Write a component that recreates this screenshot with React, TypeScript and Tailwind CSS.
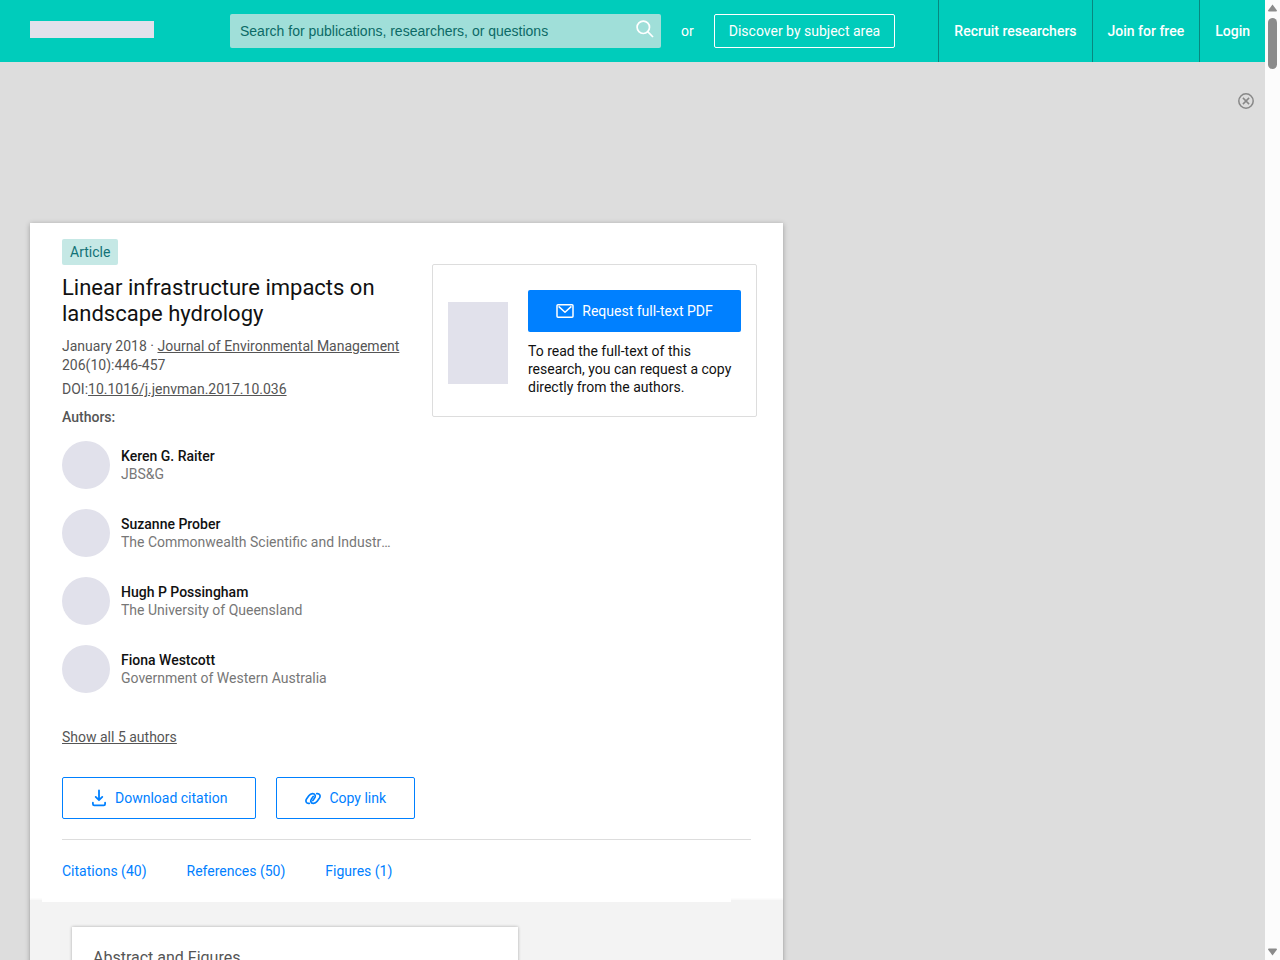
import React from 'react';

const authors = [
  { name: 'Keren G. Raiter', org: 'JBS&G' },
  { name: 'Suzanne Prober', org: 'The Commonwealth Scientific and Industrial Research Organisation' },
  { name: 'Hugh P Possingham', org: 'The University of Queensland' },
  { name: 'Fiona Westcott', org: 'Government of Western Australia' },
];

const tabs = ['Citations (40)', 'References (50)', 'Figures (1)'];
const navLinks = ['Recruit researchers', 'Join for free', 'Login'];

function SearchIcon() {
  return (
    <svg width="18" height="18" viewBox="0 0 18 18" fill="none" stroke="white" strokeWidth="1.7" aria-hidden="true">
      <circle cx="7.3" cy="7.3" r="6.2" />
      <path d="M11.7 11.7 17 17" />
    </svg>
  );
}

function MailIcon() {
  return (
    <svg width="18" height="14" viewBox="0 0 18 14" fill="none" stroke="white" strokeWidth="1.5" strokeLinejoin="round" aria-hidden="true">
      <rect x="1" y="0.8" width="16" height="12.4" rx="1" />
      <path d="M2.6 2.4 9 8.2l6.4-5.8" />
    </svg>
  );
}

function DownloadIcon() {
  return (
    <svg width="16" height="18" viewBox="0 0 16 18" fill="none" stroke="currentColor" strokeWidth="1.8" strokeLinecap="round" strokeLinejoin="round" aria-hidden="true">
      <path d="M8 1.400v9.600M4.700 7.900 8 11.200l3.300-3.300" />
      <path d="M1.900 13.700v1.300q0 1.300 1.300 1.300h9.600q1.300 0 1.300-1.300v-1.300" />
    </svg>
  );
}

function LinkIcon() {
  return (
    <svg width="16" height="13" viewBox="0 0 18 14" fill="none" stroke="currentColor" strokeWidth="1.9" strokeLinecap="round" strokeLinejoin="round" aria-hidden="true">
      <path d="M4.800 12.400C1.400 12.900.1 9.800 1.900 7.200L4.300 3.900C6.600.8 10.900.7 11.500 3.600c.2 1.300-.2 2.200-.9 3.200L8.800 9.300" />
      <path d="M13.200 1.600c3.400-.5 4.700 2.600 2.900 5.200l-2.400 3.300c-2.300 3.100-6.600 3.200-7.200.3-.2-1.300.2-2.200.9-3.200l1.800-2.500" />
    </svg>
  );
}

function CloseIcon() {
  return (
    <svg width="16" height="16" viewBox="0 0 16 16" fill="none" stroke="#888" strokeWidth="1.5" aria-hidden="true">
      <circle cx="8" cy="8" r="7.200" />
      <path d="m4.900 4.900 6.200 6.200M11.100 4.900l-6.200 6.200" />
    </svg>
  );
}

function Header() {
  return (
    <header className="flex h-[62px] shrink-0 items-center bg-[#00ccbb] pl-[30px] text-white">
      <a href="#home" aria-label="Home" className="mr-[76px] mb-1 block h-[17px] w-[124px] shrink-0 bg-[#e1e1eb]" />
      <form className="flex h-[34px] w-[431px] items-center rounded-xs bg-[#a0dfd9] pr-[7px] pl-2.5">
        <input
          type="search"
          aria-label="Search"
          placeholder="Search for publications, researchers, or questions"
          className="h-full min-w-0 flex-1 bg-transparent font-['Liberation_Sans',sans-serif] text-sm text-[#0c6a66] outline-none placeholder:text-[#0c6a66]"
        />
        <button type="button" aria-label="Submit search" className="mb-1">
          <SearchIcon />
        </button>
      </form>
      <span className="mx-5">or</span>
      <a href="#topics" className="flex h-[34px] items-center rounded-xs border border-white px-3.5 whitespace-nowrap">
        Discover by subject area
      </a>
      <nav className="ml-auto flex h-full">
        {navLinks.map((label) => (
          <a key={label} href="#nav" className="flex h-full items-center border-l border-[#08877f] px-[15px] font-medium whitespace-nowrap">
            {label}
          </a>
        ))}
      </nav>
    </header>
  );
}

function RequestBox() {
  return (
    <section className="mt-[25px] flex w-[325px] shrink-0 items-start rounded-xs border border-[#dddddd] px-[15px] pt-[25px] pb-5">
      <div className="mt-3 mr-5 h-[82px] w-[60px] shrink-0 bg-[#e1e1eb]" />
      <div className="flex-1">
        <button type="button" className="flex h-[42px] w-full items-center justify-center gap-2 rounded-xs bg-[#0080ff] text-white">
          <MailIcon />
          Request full-text PDF
        </button>
        <p className="mt-2.5 leading-[18px] text-[#111111]">
          To read the full-text of this research, you can request a copy directly from the authors.
        </p>
      </div>
    </section>
  );
}

function ArticleCard() {
  return (
    <article className="flex min-w-0 flex-1 flex-col bg-white shadow-[0_1px_5px_rgba(0,0,0,0.3)]">
      <div className="flex items-start justify-between pt-4 pr-[26px] pl-8">
        <div className="w-[340px]">
          <span className="flex h-[26px] w-fit items-center rounded-xs bg-[#c5e8e5] px-2 text-[#127277]">Article</span>
          <h1 className="mt-2.5 text-[22px] leading-[26px] text-[#111111]">
            Linear infrastructure impacts on landscape hydrology
          </h1>
          <p className="mt-2.5 leading-[19px]">
            January 2018 ·{' '}
            <a href="#journal" className="underline underline-offset-1">Journal of Environmental Management</a>{' '}
            206(10):446-457
          </p>
          <p className="mt-[5px] leading-[19px]">
            DOI:
            <a href="#doi" className="underline underline-offset-1">10.1016/j.jenvman.2017.10.036</a>
          </p>
          <h2 className="mt-[9px] leading-[19px] font-medium">Authors:</h2>
          <ul className="mt-3.5 flex flex-col gap-5">
            {authors.map((a) => (
              <li key={a.name} className="flex h-12 items-center gap-[11px]">
                <span className="size-12 shrink-0 rounded-full bg-[#e1e1eb]" />
                <div className="w-[271px] leading-[18px]">
                  <a href="#author" className="block font-medium text-[#111111]">{a.name}</a>
                  <p className="truncate text-[#777777]">{a.org}</p>
                </div>
              </li>
            ))}
          </ul>
        </div>
        <RequestBox />
      </div>
      <div className="mx-8 mt-[35px] border-b border-[#dddddd] pb-5">
        <button type="button" className="block leading-[18px] underline underline-offset-1">Show all 5 authors</button>
        <div className="mt-[31px] flex gap-5 text-[#0080ff]">
          <button type="button" className="flex h-[42px] items-center gap-2 rounded-xs border border-[#0080ff] px-7">
            <DownloadIcon />
            Download citation
          </button>
          <button type="button" className="flex h-[42px] items-center gap-2 rounded-xs border border-[#0080ff] px-7">
            <LinkIcon />
            Copy link
          </button>
        </div>
      </div>
      <nav className="z-10 mr-[52px] ml-3 flex h-[62px] items-center gap-10 bg-white pl-5 text-[#0080ff]">
        {tabs.map((t) => (
          <a key={t} href="#tab">{t}</a>
        ))}
      </nav>
      <div className="-mt-0.5 flex-1 bg-[#f3f3f3] pt-[27px] pl-[42px] shadow-[0_-1px_2px_rgba(0,0,0,0.04)]">
        <section className="h-60 w-[446px] bg-white px-[21px] pt-[21px] shadow-[0_0_3px_rgba(0,0,0,0.3)]">
          <h2 className="text-base leading-5">Abstract and Figures</h2>
        </section>
      </div>
    </article>
  );
}

function ScrollTrack() {
  return (
    <div className="flex w-[15px] shrink-0 flex-col items-center bg-[#fcfcfc] pt-1 pb-1" aria-hidden="true">
      <svg width="9" height="8" viewBox="0 0 9 8" fill="#8b8b8b"><path d="M4.500.5 9 6.500Q9 7.500 8 7.500H1Q0 7.500 0 6.500Z" /></svg>
      <div className="mt-1.5 h-[51px] w-[9px] rounded-full bg-[#8b8b8b]" />
      <svg className="mt-auto" width="9" height="8" viewBox="0 0 9 8" fill="#8b8b8b"><path d="M4.500 7.500 9 1.500Q9 .5 8 .5H1Q0 .5 0 1.500Z" /></svg>
    </div>
  );
}

export default function App() {
  return (
    <div className="flex h-screen overflow-hidden bg-[#dddddd] font-['Roboto',sans-serif] text-sm text-[#555555]">
      <div className="flex min-w-0 flex-1 flex-col">
        <Header />
        <div className="flex h-[161px] shrink-0 items-start justify-end pt-[31px] pr-[11px]">
          <button type="button" aria-label="Close banner" className="block">
            <CloseIcon />
          </button>
        </div>
        <main className="flex flex-1 pl-[30px]">
          <ArticleCard />
          <aside className="w-[482px] shrink-0" />
        </main>
      </div>
      <ScrollTrack />
    </div>
  );
}
